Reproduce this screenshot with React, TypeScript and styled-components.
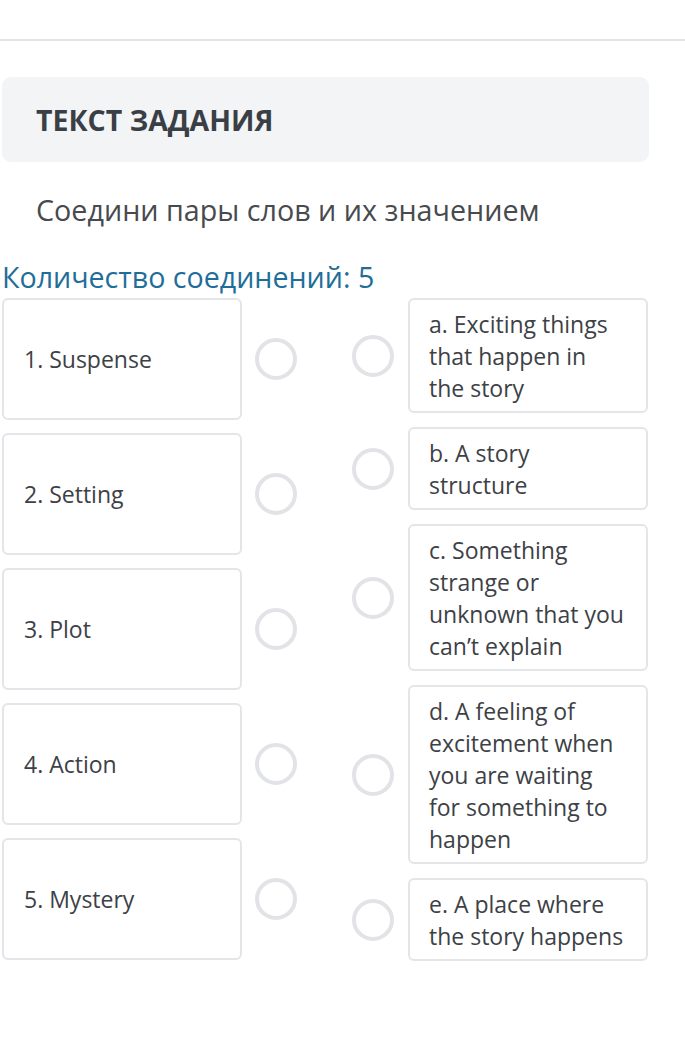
import React from 'react';
import styled, { createGlobalStyle } from 'styled-components';

const GlobalStyle = createGlobalStyle`
  body {
    margin: 0;
    background: #ffffff;
    font-family: 'Open Sans', 'Noto Sans', sans-serif;
    color: #3d4146;
  }
`;

const Page = styled.div`
  width: 685px;
  padding-top: 39px;
`;

const TopRule = styled.div`
  border-top: 2px solid #e4e4e4;
`;

const Content = styled.div`
  width: 647px;
  margin-left: 2px;
`;

const TaskHeader = styled.div`
  margin-top: 36px;
  height: 85px;
  display: flex;
  align-items: center;
  padding-left: 34px;
  background: #f3f4f6;
  border-radius: 9px;
  font-size: 28.5px;
  font-weight: 700;
  color: #3a3f46;
`;

const Prompt = styled.p`
  margin: 28px 0 0 34px;
  font-size: 28.7px;
  line-height: 40px;
  color: #474a4e;
`;

const Count = styled.p`
  margin: 29px 0 0;
  font-size: 28.6px;
  line-height: 36px;
  color: #1f6e99;
`;

const Board = styled.div`
  display: grid;
  grid-template-columns: 295px 296px;
  column-gap: 55px;
  align-items: start;
  margin-top: 3px;
`;

const Column = styled.div<{ $gap: number }>`
  display: flex;
  flex-direction: column;
  gap: ${(p) => p.$gap}px;
`;

const Row = styled.div<{ $side: 'left' | 'right' }>`
  display: flex;
  align-items: center;
  gap: ${(p) => (p.$side === 'left' ? 13 : 14)}px;
  flex-direction: ${(p) => (p.$side === 'left' ? 'row' : 'row-reverse')};
  justify-content: flex-end;
`;

const Card = styled.div<{ $side: 'left' | 'right' }>`
  box-sizing: border-box;
  width: 240px;
  flex: none;
  border: 2px solid #e3e5e8;
  border-radius: 6px;
  font-size: 23px;
  line-height: 32px;
  color: #3d4146;
  ${(p) =>
    p.$side === 'left'
      ? `
    height: 122px;
    display: flex;
    align-items: center;
    padding: 0 10px 0 20px;
  `
      : `
    padding: 7.5px 20px 7.5px 19px;
  `}
`;

const Dot = styled.span`
  box-sizing: border-box;
  flex: none;
  width: 42px;
  height: 42px;
  border-radius: 50%;
  border: 4px solid #e1e3e6;
`;

const terms = ['1. Suspense', '2. Setting', '3. Plot', '4. Action', '5. Mystery'];

const meanings = [
  'a. Exciting things that happen in the story',
  'b. A story structure',
  'c. Something strange or unknown that you can\u2019t explain',
  'd. A feeling of excitement when you are waiting for something to happen',
  'e. A place where the story happens',
];

const App: React.FC = () => {
  return (
    <Page>
      <GlobalStyle />
      <TopRule />
      <Content>
        <TaskHeader>ТЕКСТ ЗАДАНИЯ</TaskHeader>
        <Prompt>Соедини пары слов и их значением</Prompt>
        <Count>Количество соединений: 5</Count>
        <Board>
          <Column $gap={13}>
            {terms.map((t) => (
              <Row key={t} $side='left'>
                <Card $side='left'>{t}</Card>
                <Dot />
              </Row>
            ))}
          </Column>
          <Column $gap={14}>
            {meanings.map((m) => (
              <Row key={m} $side='right'>
                <Card $side='right'>{m}</Card>
                <Dot />
              </Row>
            ))}
          </Column>
        </Board>
      </Content>
    </Page>
  );
};

export default App;
